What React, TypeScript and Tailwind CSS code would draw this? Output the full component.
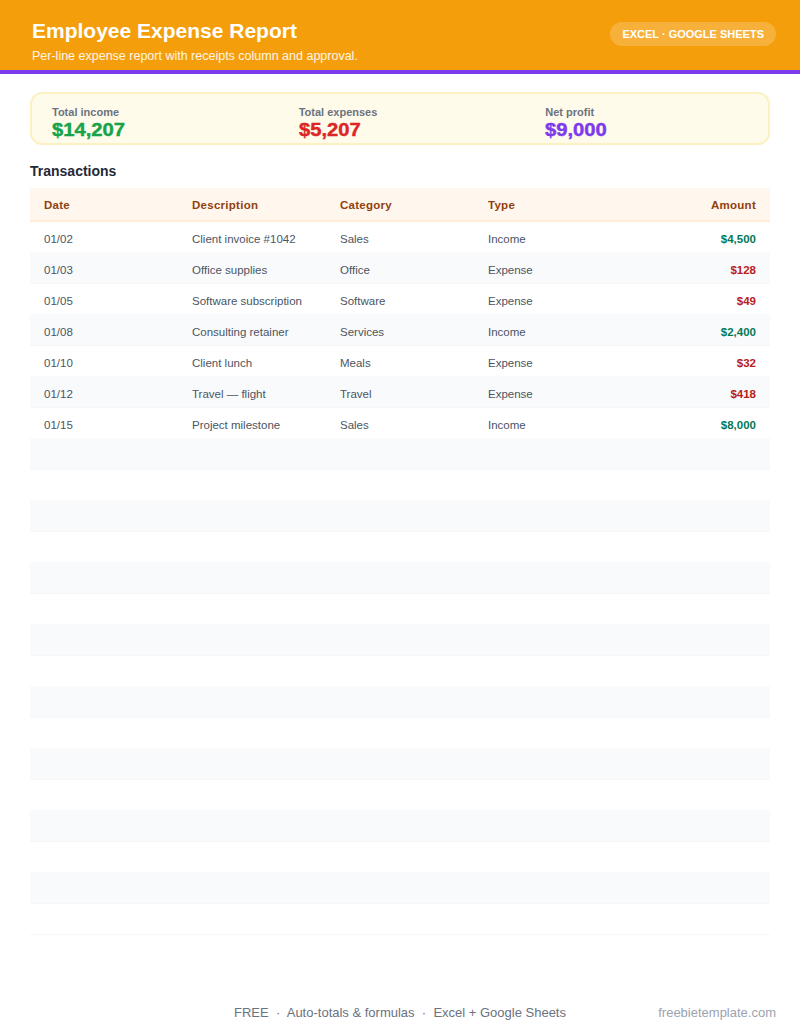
import React from 'react';

const rows = [
  { date: '01/02', desc: 'Client invoice #1042', cat: 'Sales', type: 'Income', amount: '$4,500' },
  { date: '01/03', desc: 'Office supplies', cat: 'Office', type: 'Expense', amount: '$128' },
  { date: '01/05', desc: 'Software subscription', cat: 'Software', type: 'Expense', amount: '$49' },
  { date: '01/08', desc: 'Consulting retainer', cat: 'Services', type: 'Income', amount: '$2,400' },
  { date: '01/10', desc: 'Client lunch', cat: 'Meals', type: 'Expense', amount: '$32' },
  { date: '01/12', desc: 'Travel — flight', cat: 'Travel', type: 'Expense', amount: '$418' },
  { date: '01/15', desc: 'Project milestone', cat: 'Sales', type: 'Income', amount: '$8,000' },
];

const totals = [
  { label: 'Total income', value: '$14,207', color: 'text-[#16a34a]' },
  { label: 'Total expenses', value: '$5,207', color: 'text-[#dc2626]' },
  { label: 'Net profit', value: '$9,000', color: 'text-[#7c3aed]' },
];

const blanks = Array.from({ length: 16 }, (_, i) => i);

const rowBase = 'grid grid-cols-[148px_148px_148px_1fr_auto] items-center px-[14px]';
const whiteRow = 'h-[30px] pt-[6px] bg-white';
const greyRow = 'h-[32px] pt-[7px] bg-[#f9fafb] border-b border-[#f5f6f7]';

export default function App() {
  return (
    <div className="w-[800px] h-[1035px] bg-white flex flex-col font-['Liberation_Sans',sans-serif] overflow-hidden">
      <header className="h-[74px] shrink-0 bg-[#f59e0b] border-b-4 border-[#7c3aed] pl-8 pr-6 flex justify-between items-start">
        <div className="pt-[18px]">
          <h1 className="text-[21px] leading-[26px] font-bold text-white">Employee Expense Report</h1>
          <p className="mt-1 text-[12.5px] leading-[16px] text-white/90">Per-line expense report with receipts column and approval.</p>
        </div>
        <div className="mt-[22px] h-6 px-3 rounded-full bg-white/20 text-white text-[11px] font-bold flex items-center">
          EXCEL · GOOGLE SHEETS
        </div>
      </header>

      <main className="flex-1 px-[30px] pt-[18px]">
        <section className="h-[53px] rounded-xl border-2 border-[#fdf0c2] bg-[#fffbeb] pl-5 pt-3 grid grid-cols-[246.67px_246.67px_1fr]">
          {totals.map(t => (
            <div key={t.label}>
              <div className="text-[11px] leading-[13px] font-bold text-[#6b7280]">{t.label}</div>
              <div className={`mt-[2px] text-[17.5px] leading-[19px] font-bold inline-block origin-left scale-x-[1.155] [-webkit-text-stroke:0.4px] ${t.color}`}>{t.value}</div>
            </div>
          ))}
        </section>

        <h2 className="mt-[18px] text-[14px] leading-[17px] font-bold text-[#1f2937]">Transactions</h2>

        <div className="mt-2 text-[11.5px]">
          <div className={`${rowBase} h-[34px] pt-1 tracking-[0.27px] bg-[#fff7ed] border-b-2 border-[#ffedd5] font-bold text-[#92400e]`}>
            <div>Date</div>
            <div>Description</div>
            <div>Category</div>
            <div>Type</div>
            <div className="text-right">Amount</div>
          </div>
          {rows.map((r, i) => (
            <div key={r.date} className={`${rowBase} text-[#4b5563] ${i % 2 ? greyRow : whiteRow}`}>
              <div>{r.date}</div>
              <div>{r.desc}</div>
              <div>{r.cat}</div>
              <div>{r.type}</div>
              <div className={`text-right font-bold ${r.type === 'Income' ? 'text-[#047857]' : 'text-[#b91c1c]'}`}>{r.amount}</div>
            </div>
          ))}
          {blanks.map(i => (
            <div key={i} className={i % 2 ? (i === 15 ? 'h-[31px] bg-white border-b border-[#f5f6f7]' : 'h-[30px] bg-white') : 'h-[32px] bg-[#f9fafb] border-b border-[#f5f6f7]'} />
          ))}
        </div>
      </main>

      <footer className="relative h-[45px] shrink-0 pt-[15px] text-[13px] leading-[15px]">
        <div className="text-center text-[#6b7280] whitespace-pre">FREE  ·  Auto-totals &amp; formulas  ·  Excel + Google Sheets</div>
        <div className="absolute right-6 top-[15px] text-[#9ca3af]">freebietemplate.com</div>
      </footer>
    </div>
  );
}
